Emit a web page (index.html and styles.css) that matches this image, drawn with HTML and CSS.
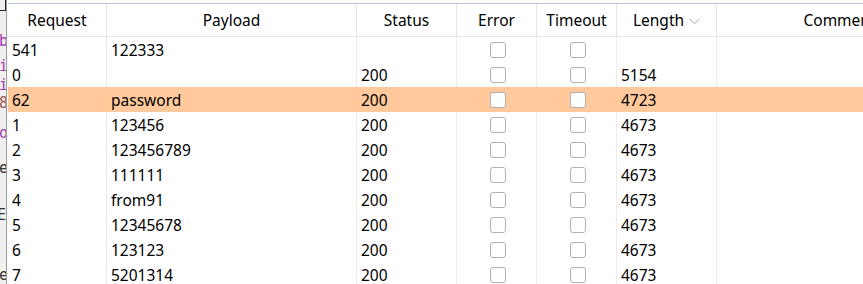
FILE: index.html
```html
<!DOCTYPE html>
<html>
<head>
<meta charset="utf-8">
<link rel="stylesheet" href="styles.css">
</head>
<body>
<div class="page">
  <div class="gutter">
    <div class="box"></div>
    <div class="frag purple g1">b</div>
    <div class="frag purple g2">i</div>
    <div class="frag purple g3">i</div>
    <div class="frag brown g4">8</div>
    <div class="frag purple g5">o</div>
    <div class="frag dark g6">e</div>
    <div class="frag dark g7">E</div>
    <div class="frag dark g8">e</div>
  </div>
  <div class="main">
    <div class="table">
      <div class="row head">
        <div class="cell">Request</div>
        <div class="cell">Payload</div>
        <div class="cell">Status</div>
        <div class="cell">Error</div>
        <div class="cell">Timeout</div>
        <div class="cell">Length<svg class="sort" width="11" height="7" viewBox="0 0 11 7"><path d="M0.5 0.8 L5.5 5.6 L10.5 0.8" fill="none" stroke="#a8a8a8" stroke-width="1"/></svg></div>
        <div class="cell">Comment</div>
      </div>
      <div class="row"><div class="cell">541</div><div class="cell">122333</div><div class="cell"></div><div class="cell c"><span class="cb"></span></div><div class="cell c"><span class="cb"></span></div><div class="cell"></div><div class="cell"></div></div>
      <div class="row"><div class="cell">0</div><div class="cell"></div><div class="cell">200</div><div class="cell c"><span class="cb"></span></div><div class="cell c"><span class="cb"></span></div><div class="cell">5154</div><div class="cell"></div></div>
      <div class="row hl"><div class="cell">62</div><div class="cell">password</div><div class="cell">200</div><div class="cell c"><span class="cb"></span></div><div class="cell c"><span class="cb"></span></div><div class="cell">4723</div><div class="cell"></div></div>
      <div class="row"><div class="cell">1</div><div class="cell">123456</div><div class="cell">200</div><div class="cell c"><span class="cb"></span></div><div class="cell c"><span class="cb"></span></div><div class="cell">4673</div><div class="cell"></div></div>
      <div class="row"><div class="cell">2</div><div class="cell">123456789</div><div class="cell">200</div><div class="cell c"><span class="cb"></span></div><div class="cell c"><span class="cb"></span></div><div class="cell">4673</div><div class="cell"></div></div>
      <div class="row"><div class="cell">3</div><div class="cell">111111</div><div class="cell">200</div><div class="cell c"><span class="cb"></span></div><div class="cell c"><span class="cb"></span></div><div class="cell">4673</div><div class="cell"></div></div>
      <div class="row"><div class="cell">4</div><div class="cell">from91</div><div class="cell">200</div><div class="cell c"><span class="cb"></span></div><div class="cell c"><span class="cb"></span></div><div class="cell">4673</div><div class="cell"></div></div>
      <div class="row"><div class="cell">5</div><div class="cell">12345678</div><div class="cell">200</div><div class="cell c"><span class="cb"></span></div><div class="cell c"><span class="cb"></span></div><div class="cell">4673</div><div class="cell"></div></div>
      <div class="row"><div class="cell">6</div><div class="cell">123123</div><div class="cell">200</div><div class="cell c"><span class="cb"></span></div><div class="cell c"><span class="cb"></span></div><div class="cell">4673</div><div class="cell"></div></div>
      <div class="row"><div class="cell">7</div><div class="cell">5201314</div><div class="cell">200</div><div class="cell c"><span class="cb"></span></div><div class="cell c"><span class="cb"></span></div><div class="cell">4673</div><div class="cell"></div></div>
    </div>
  </div>
</div>
</body>
</html>
```
FILE: styles.css
```css
html, body {
  margin: 0;
  padding: 0;
  background: #ffffff;
  overflow: hidden;
}
.page {
  display: flex;
  width: 863px;
  height: 284px;
  overflow: hidden;
  font-family: "Noto Sans", "Open Sans", sans-serif;
  font-size: 15.5px;
  color: #000;
}
.gutter {
  position: relative;
  flex: 0 0 6px;
  width: 6px;
  background: #f0f0f0;
  border-right: 1px solid #9a9a9a;
  margin-right: 1px;
  overflow: hidden;
}
.box {
  position: absolute;
  left: -3px;
  top: -1px;
  width: 7px;
  height: 10px;
  border: 1px solid #222;
}
.frag {
  position: absolute;
  left: -1px;
  font-family: "DejaVu Sans Mono", monospace;
  font-size: 15px;
  line-height: 15px;
}
.purple { color: #a040b0; }
.brown { color: #a05a5a; }
.dark { color: #333; }
.g1 { top: 34px; }
.g2 { top: 59px; }
.g3 { top: 78px; }
.g4 { top: 96px; }
.g5 { top: 126px; }
.g6 { top: 161px; }
.g7 { top: 208px; left: -3px; }
.g8 { top: 268px; }
.main {
  flex: 1 1 auto;
  min-width: 0;
  overflow: hidden;
}
.table {
  margin-top: 3px;
  border-top: 1px solid #b4c4dc;
  width: 1000px;
}
.row {
  display: grid;
  grid-template-columns: 99px 250px 100px 80px 80px 100px 246px;
  height: 25px;
}
.row.head {
  height: 32px;
  border-bottom: 1px solid #e4e4e4;
}
.cell {
  border-right: 1px solid #ececec;
  display: flex;
  align-items: center;
  padding-left: 4px;
  white-space: nowrap;
  line-height: 1;
}
.row:not(.head) .cell {
  padding-top: 2px;
}
.head .cell {
  justify-content: center;
  padding-left: 0;
  padding-top: 1px;
  border-right-color: #e4e4e4;
}
.hl {
  background: #ffc99b;
}
.hl .cell {
  border-right-color: transparent;
}
.row:not(.head) .cell.c {
  justify-content: center;
  padding-left: 3px;
  padding-top: 0;
}
.cb {
  width: 14px;
  height: 14px;
  border: 1.5px solid #b0b0b0;
  border-radius: 3px;
  background: #fff;
}
.sort {
  margin-left: 5px;
  margin-top: 1px;
}
```
